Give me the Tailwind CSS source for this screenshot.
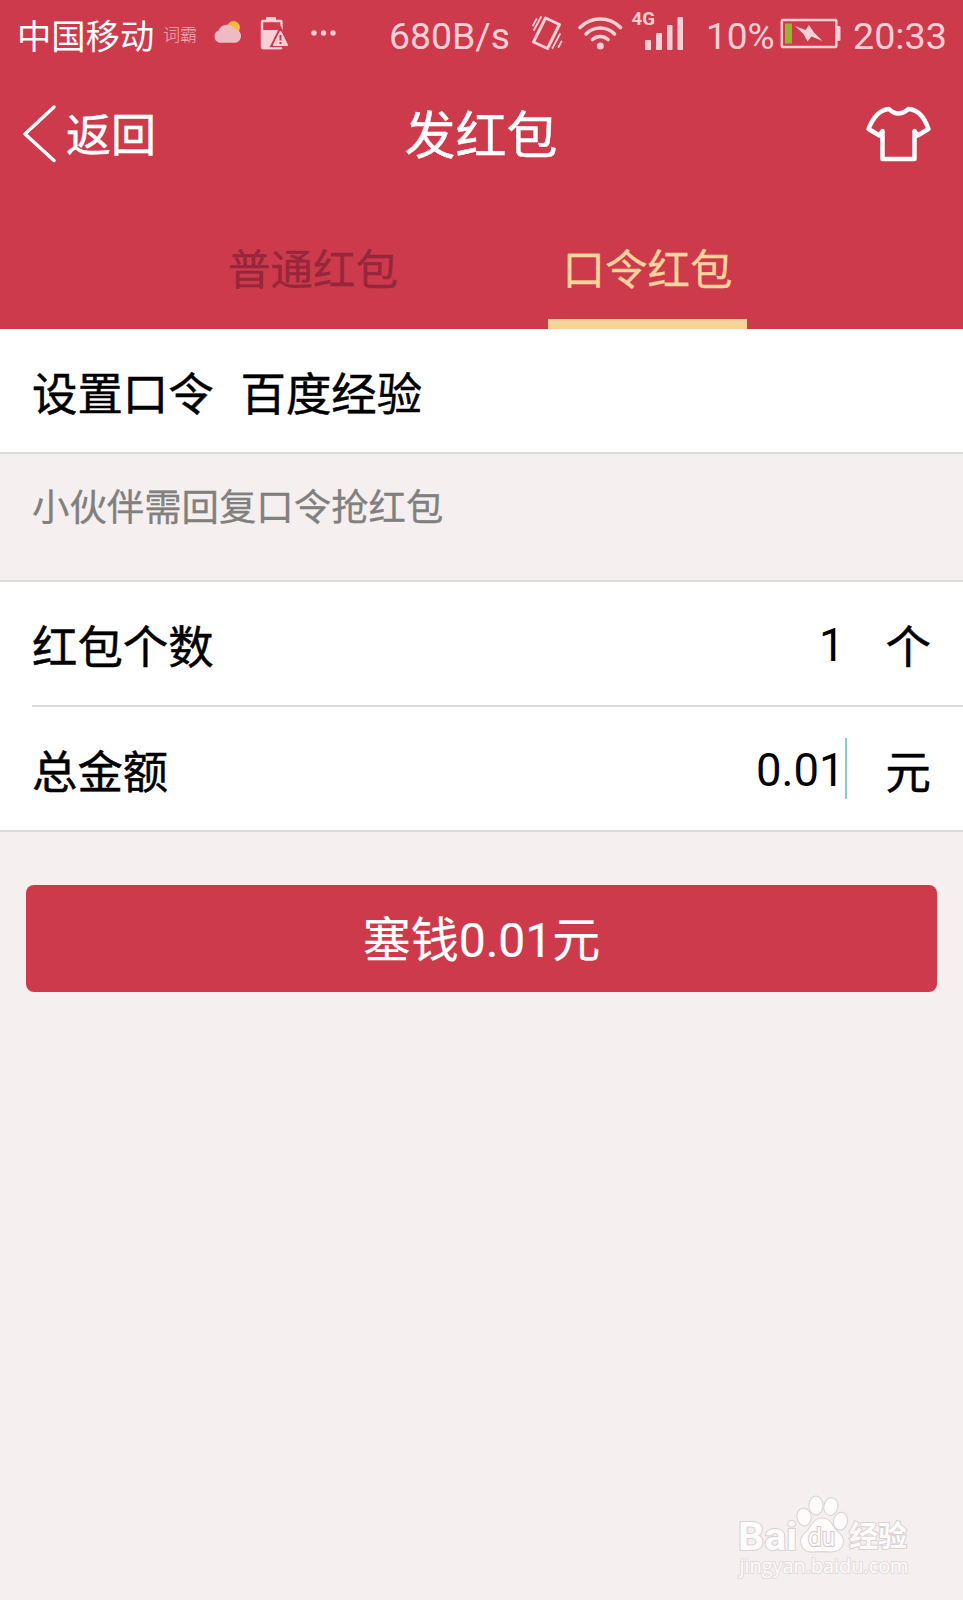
<!DOCTYPE html>
<html lang="zh-CN">

<head>
    <meta charset="UTF-8">
    <meta name="viewport" content="width=device-width, initial-scale=1.0">
    <title>发红包</title>
    <script src="https://cdn.jsdelivr.net/npm/@tailwindcss/browser@4"></script>
</head>

<body class="bg-[#f5f0ef] font-[Roboto,'Noto_Sans_CJK_SC',sans-serif] text-black">
    <div class="relative w-[963px] h-[1600px] overflow-hidden">
        <header class="bg-[#cd3a4c] h-[329px] flex flex-col">
            <!-- status bar -->
            <div class="h-[70px] flex items-center text-[#fccfd5] whitespace-nowrap leading-none">
                <span class="ml-[17px] w-[146px] text-[34.300px] text-white pt-1">中国移动</span>
                <span class="w-[45px] text-[17px] font-light opacity-80">词霸</span>
                <svg class="w-[132px] h-[70px] shrink-0" viewBox="208 0 132 70">
                    <circle cx="233.500" cy="27.500" r="6.500" fill="#fbb83f" />
                    <path d="M219.500 42.800a6.500 6.500 0 0 1-1-12.300a9.300 9.300 0 0 1 16.500-1.500a7 7 0 0 1 .5 13.800z" fill="#eebbc5" />
                    <rect x="266" y="17" width="10" height="5" rx="1" fill="#fccfd5" />
                    <rect x="262" y="21" width="19.500" height="27" rx="1" fill="none" stroke="#fccfd5" stroke-width="2.400" />
                    <path d="M262 30h20v18h-20z" fill="#fccfd5" />
                    <path d="M280.500 32l6.500 13h-13z" fill="#fccfd5" stroke="#cd3a4c" stroke-width="6" />
                    <path d="M280.500 32l6.500 13h-13z" fill="#fccfd5" stroke="#fccfd5" stroke-width="2" stroke-linejoin="round" />
                    <path d="M280.500 35v5.500M280.500 42v2" stroke="#cd3a4c" stroke-width="2" />
                    <path d="M262 48.200h20" stroke="#fccfd5" stroke-width="2" />
                    <g fill="#fccfd5">
                        <circle cx="314" cy="33" r="2.700" />
                        <circle cx="323.500" cy="33" r="2.700" />
                        <circle cx="333" cy="33" r="2.700" />
                    </g>
                </svg>
                <span class="ml-[49px] w-[135px] text-[37.400px] pt-[3px]">680B/s</span>
                <svg class="w-[182px] h-[70px] shrink-0" viewBox="524 0 182 70" fill="none" stroke="#fccfd5" stroke-linecap="round">
                    <path d="M545.500 18L559.500 24.500L547.500 48.500L533.500 42z" stroke-width="3" stroke-linejoin="round" />
                    <path d="M541 17l-7 13M536.500 19l-3.500 6.500M560 34l-7.500 14M561.500 41.500l-3 5.500" stroke-width="1.800" />
                    <g stroke-width="3.600">
                        <path d="M580 27.500a28.500 28.500 0 0 1 40.500 0" />
                        <path d="M586 34a20 20 0 0 1 28.500 0" />
                        <path d="M592.500 39.500a11.500 11.500 0 0 1 15.500 0" />
                    </g>
                    <g fill="#fccfd5" stroke="none">
                        <circle cx="600.300" cy="46" r="3.500" />
                        <rect x="645" y="40" width="6" height="10" rx="1" />
                        <rect x="656" y="33" width="6" height="17" rx="1" />
                        <rect x="667" y="25" width="5.500" height="25" rx="1" />
                        <rect x="677.500" y="17" width="5.500" height="33" rx="1" />
                        <text x="631.500" y="25" font-size="18" font-weight="bold" textLength="23.500" lengthAdjust="spacingAndGlyphs">4G</text>
                    </g>
                </svg>
                <span class="w-[74px] text-[37px] pt-[3px]">10%</span>
                <svg class="w-[73px] h-[70px] shrink-0" viewBox="780 0 73 70">
                    <rect x="781.800" y="20" width="54.500" height="27" rx="1" fill="none" stroke="#fccfd5" stroke-width="2.500" />
                    <path d="M837 26h2q1.500 0 1.500 1.500v12q0 1.500-1.500 1.500h-2z" fill="#fccfd5" />
                    <rect x="785" y="23.500" width="7" height="20" fill="#96b52e" />
                    <path d="M795 26L805.500 30L809 25L814 32.500L822.500 41L811.500 36.500L807.500 41.500L803.500 34z" fill="#fccfd5" />
                </svg>
                <span class="text-[37.700px] pt-[3px]">20:33</span>
            </div>
            <!-- title bar -->
            <div class="h-[128px] grid grid-cols-[1fr_auto_1fr] items-center text-white leading-none">
                <div class="flex items-center">
                    <svg class="ml-5 w-[46px] h-[64px]" viewBox="20 102 46 64" fill="none" stroke="#fff" stroke-width="3.500" stroke-linecap="round" stroke-linejoin="round">
                        <path d="M54 107L25 134L54 160.500" />
                    </svg>
                    <span class="pt-[5px] text-[45px] [-webkit-text-stroke:0.5px_white]">返回</span>
                </div>
                <h1 class="pt-[5px] pr-px text-[51px] font-normal [-webkit-text-stroke:0.5px_white]">发红包</h1>
                <svg class="w-[70px] h-[64px] justify-self-end mr-[29px]" viewBox="864 102 70 64" fill="none" stroke="#fff" stroke-width="4.500" stroke-linejoin="round" stroke-linecap="round">
                    <path d="M889 109Q898 118 908.500 109Q922 110 928.500 129L917.500 135.500L914.500 131V159H882.500V131L879.500 135.500L868.500 129Q876 110 889 109z" />
                </svg>
            </div>
            <!-- tabs -->
            <div class="flex-1 flex pl-[214px] gap-[136px] text-[42.500px] leading-none text-center">
                <div class="w-[198px] pt-[52px] text-[#96263a] [-webkit-text-stroke:0.3px]">普通红包</div>
                <div class="w-[199px] pt-[52px] text-[#fbd49b] border-b-[10px] border-[#f6d396] [-webkit-text-stroke:0.3px]">口令红包</div>
            </div>
        </header>

        <main class="text-[45.400px] leading-none [-webkit-text-stroke:0.500px]">
            <div class="h-[125px] bg-white border-b-2 border-[#dedcdb] pl-8 pt-2.5 flex items-center gap-[27px]">
                <span>设置口令</span>
                <span>百度经验</span>
            </div>
            <p class="h-[126px] pt-9 pl-8 text-[37.400px] text-[#80807e] [-webkit-text-stroke:0.300px]">小伙伴需回复口令抢红包</p>
            <div class="bg-white border-y-2 border-[#dedcdb]">
                <div class="h-[125px] ml-8 pr-8 border-b-2 border-[#dedcdb] flex items-center">
                    <span class="flex-1 pt-2.5">红包个数</span>
                    <span class="mr-[41px] pt-[5px] [-webkit-text-stroke:0]">1</span>
                    <span class="pt-2.5">个</span>
                </div>
                <div class="h-[123px] ml-8 pr-8 flex items-center">
                    <span class="flex-1 pt-2.5">总金额</span>
                    <span class="pt-[5px] [-webkit-text-stroke:0]">0.01</span>
                    <span class="w-0.5 h-[61px] bg-[#8accc6] mr-[39px]"></span>
                    <span class="pt-2.5">元</span>
                </div>
            </div>
            <button class="block mt-[53px] ml-[26px] w-[911px] h-[107px] pt-[5px] rounded-lg bg-[#cd3a4c] text-white text-[48px] leading-none [-webkit-text-stroke:0.200px]">塞钱0.01元</button>
        </main>

        <!-- watermark -->
        <svg class="absolute left-[730px] top-[1490px] w-[190px] h-[95px]" viewBox="730 1490 190 95" fill="#fdfbfb" stroke="#d8d2d2" stroke-width="2" paint-order="stroke">
            <text x="738" y="1549.500" font-size="38" font-weight="bold" textLength="59" lengthAdjust="spacingAndGlyphs">Bai</text>
            <ellipse cx="804" cy="1517" rx="6.500" ry="8.500" transform="rotate(-10 804 1517)" />
            <ellipse cx="816" cy="1505.500" rx="6.500" ry="9" />
            <ellipse cx="831" cy="1506.500" rx="6.500" ry="8.500" transform="rotate(12 831 1506)" />
            <ellipse cx="840.500" cy="1521" rx="6.500" ry="8.500" transform="rotate(12 840 1521)" />
            <path d="M822 1518.500c-9 0-10 8-15 13c-6 5-7 8-5 14c3 8 12 6 20 5.500c8 .5 17 2 20-5.500c2-6 1-9-5-14c-5-5-6-13-15-13z" />
            <text x="808" y="1546" font-size="25" textLength="27" lengthAdjust="spacingAndGlyphs" stroke="#cfc9c9">du</text>
            <text x="849" y="1547" font-size="29" font-weight="bold">经验</text>
            <text x="739.500" y="1572.500" font-size="20" font-family="Open Sans" textLength="169" lengthAdjust="spacingAndGlyphs" stroke="#e2dddd">jingyan.baidu.com</text>
        </svg>
    </div>
</body>

</html>
